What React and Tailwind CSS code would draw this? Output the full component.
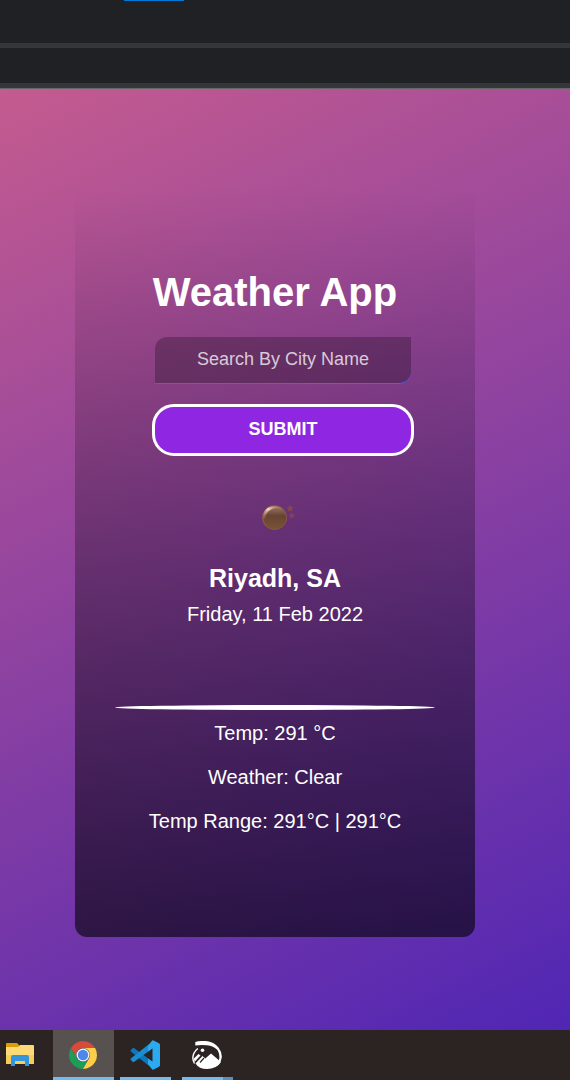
const text = "font-['Liberation_Sans',Arial,sans-serif]";

function MoonIcon() {
  return (
    <svg width="50" height="50" viewBox="0 0 50 50" aria-hidden="true">
      <defs>
        <linearGradient id="moon" x1="0" y1="0" x2="0" y2="1">
          <stop offset="0" stopColor="#9a7663" />
          <stop offset="0.4" stopColor="#664433" />
          <stop offset="1" stopColor="#7b5335" />
        </linearGradient>
        <linearGradient id="shine" x1="0" y1="1" x2="0.8" y2="0">
          <stop offset="0" stopColor="#b47a62" stopOpacity="0.2" />
          <stop offset="0.6" stopColor="#f1d7cb" />
          <stop offset="1" stopColor="#c08c74" stopOpacity="0.3" />
        </linearGradient>
      </defs>
      <circle cx="24.500" cy="25.500" r="12.500" fill="#8b5546" />
      <circle cx="24.800" cy="26" r="11.300" fill="url(#moon)" />
      <path d="M13 27C12.500 19 17.500 14 24.500 14c3.500 0 6 1.200 8 3.500-3-1.500-6-1.800-9-1-4.500 1-7.500 4.500-8.500 10Z" fill="url(#shine)" />
      <path d="m40 12.500 1.100 2.400 2.700.3-2 1.900.6 2.700-2.400-1.400-2.400 1.400.6-2.700-2-1.900 2.700-.3ZM41.800 20.500l.9 2 2.200.2-1.600 1.500.4 2.200-1.900-1.100-1.900 1.100.4-2.200-1.600-1.500 2.200-.2Z" fill="#85464e" />
    </svg>
  );
}

function FolderIcon() {
  return (
    <svg width="28" height="25" viewBox="0 0 28 25" aria-hidden="true">
      <path d="M0 2a1 1 0 0 1 1-1h10l2 2v4H0Z" fill="#dd9b08" />
      <path d="M0 5h12l2-2h13a1 1 0 0 1 1 1v18H0Z" fill="#ffd976" />
      <path d="M0 13h28v9H0Z" fill="#f8cc58" />
      <path d="M5 24V15a2 2 0 0 1 2-2h14a2 2 0 0 1 2 2v9h-4v-5H9v5Z" fill="#3595dc" />
      <path d="M10 19h8v3h-8Z" fill="#f8cc58" />
    </svg>
  );
}

function ChromeIcon() {
  return (
    <svg width="28" height="28" viewBox="0 0 28 28" aria-hidden="true">
      <path d="M1.880 7A14 14 0 0 1 26.120 7H14a7 7 0 0 0-6.060 10.500Z" fill="#d84a3c" />
      <path d="M1.880 7A14 14 0 0 0 14 28l6.060-10.500a7 7 0 0 1-12.120 0Z" fill="#1c9d58" />
      <path d="M26.120 7A14 14 0 0 1 14 28l6.060-10.500A7 7 0 0 0 14 7Z" fill="#ffcd48" />
      <circle cx="14" cy="14" r="6.500" fill="#f4f4f4" />
      <circle cx="14" cy="14" r="5.200" fill="#4b87ed" />
    </svg>
  );
}

function CodeIcon() {
  return (
    <svg width="30" height="30" viewBox="0 0 30 30" aria-hidden="true">
      <path d="M.8 10.200 2.500 8.300q.9-.7 1.800 0L23 22v7L.8 11.500Q.2 10.800.8 10.200Z" fill="#0f78bd" />
      <path d="M.8 19.800 2.500 21.700q.9.700 1.800 0L23 8V1L.8 18.500Q.2 19.200.8 19.800Z" fill="#168fd4" />
      <path d="M22.500 8.200 18 11.600V6L22 .8q.6-.8 1.500-.3L29 3.200q1 .6 1 1.800v20q0 1.200-1 1.800l-5.500 2.700q-.9.500-1.500-.3L18 24v-5.600l4.500 3.400Z" fill="#2baaf2" />
    </svg>
  );
}

function PhotoIcon() {
  return (
    <svg width="30" height="28" viewBox="0 0 30 28" aria-hidden="true">
      <path d="M3.300 1Q8-.4 14 .1 22 1 26.500 6.500 30 11 29.800 16 29 22 25 25l2-6Q28.300 13.500 25.500 9 21.500 5 15 4.300 8.500 3.500 3.300 4.600Z" fill="#fff" />
      <path d="M5.800 7.500Q1 11.500.8 17q.2 3 1.700 5.500" fill="none" stroke="#fff" strokeWidth="1.400" />
      <path d="M1.800 17.500 6.500 13l2 1.500-6 6.500Z" fill="#fff" />
      <path d="M3.500 22.500 10.500 15l2.800 2.500L19 12.500 29 21q-4.500 7-14 7-8 0-11.500-5.500Z" fill="#fff" />
      <path d="m8 21.500 4-4.500" stroke="#2c2423" strokeWidth="1.200" />
      <circle cx="10.500" cy="9.300" r="1.800" fill="#fff" />
    </svg>
  );
}

function Task({ label, place, bar, active, children }) {
  return (
    <button
      type="button"
      aria-label={label}
      className={`flex h-full shrink-0 flex-col ${place} ${active ? "bg-[#575150]" : ""}`}
    >
      <span className="flex flex-1 items-center justify-center pt-0.5 pr-0.5">{children}</span>
      <span className={`h-[3px] w-full ${bar}`} />
    </button>
  );
}

export default function App() {
  return (
    <div className={`flex min-h-screen flex-col text-white ${text}`}>
      <header className="border-b border-[#67676a] bg-[#202124]">
        <div className="h-12 border-b-[5px] border-[#35363a]">
          <div className="ml-31 h-px w-15 bg-[#0078d7]" />
        </div>
        <div className="h-10 border-b-[5px] border-[#35363a]" />
      </header>

      <main className="flex flex-1 flex-col items-center bg-[linear-gradient(153deg,#c45b8f,#5026b4)] pt-24 pr-5 pb-[93px]">
        <section className="flex w-100 max-w-full flex-1 flex-col items-center rounded-xl bg-linear-to-b from-black/0 to-black/60 px-10 pt-20">
          <h1 className="text-[40px] leading-[54px] font-bold">Weather App</h1>
          <form className="flex flex-col items-center pl-4" onSubmit={(e) => e.preventDefault()}>
            <input
              type="text"
              aria-label="Search by city name"
              placeholder="Search By City Name"
              className="mt-[18px] h-[47px] w-64 rounded-tl-xl rounded-br-xl border-b border-[#4b62ee] bg-black/25 pb-0.5 text-center text-lg placeholder:text-white/75"
            />
            <button
              type="submit"
              className="mt-5 h-[52px] w-[262px] rounded-[22px] border-3 border-white bg-[#8e26e2] pb-0.5 text-lg font-bold"
            >
              SUBMIT
            </button>
          </form>
          <div className="mt-9">
            <MoonIcon />
          </div>
          <h2 className="mt-5 text-[25px] leading-8 font-bold">Riyadh, SA</h2>
          <p className="mt-1 text-xl leading-8">Friday, 11 Feb 2022</p>
          <hr className="mt-[75px] h-[5px] w-full rounded-[50%] border-0 bg-white" />
          <div className="mt-[7px] flex flex-col gap-3 text-center text-xl leading-8">
            <p>Temp: 291 °C</p>
            <p>Weather: Clear</p>
            <p>Temp Range: 291°C | 291°C</p>
          </div>
        </section>
      </main>

      <footer className="flex h-[50px] bg-[#2c2423]">
        <Task label="Files" place="mr-[11px] w-[42px]" bar="bg-transparent">
          <FolderIcon />
        </Task>
        <Task label="Chrome" place="mr-1.5 w-[61px]" bar="bg-[#76b9ed]" active>
          <ChromeIcon />
        </Task>
        <Task label="Code" place="mr-[11px] w-[51px]" bar="bg-[#76b9ed]">
          <CodeIcon />
        </Task>
        <Task label="Photos" place="w-[51px]" bar="border-r-[10px] border-[#5d8db8] bg-[#76b9ed]">
          <PhotoIcon />
        </Task>
      </footer>
    </div>
  );
}
